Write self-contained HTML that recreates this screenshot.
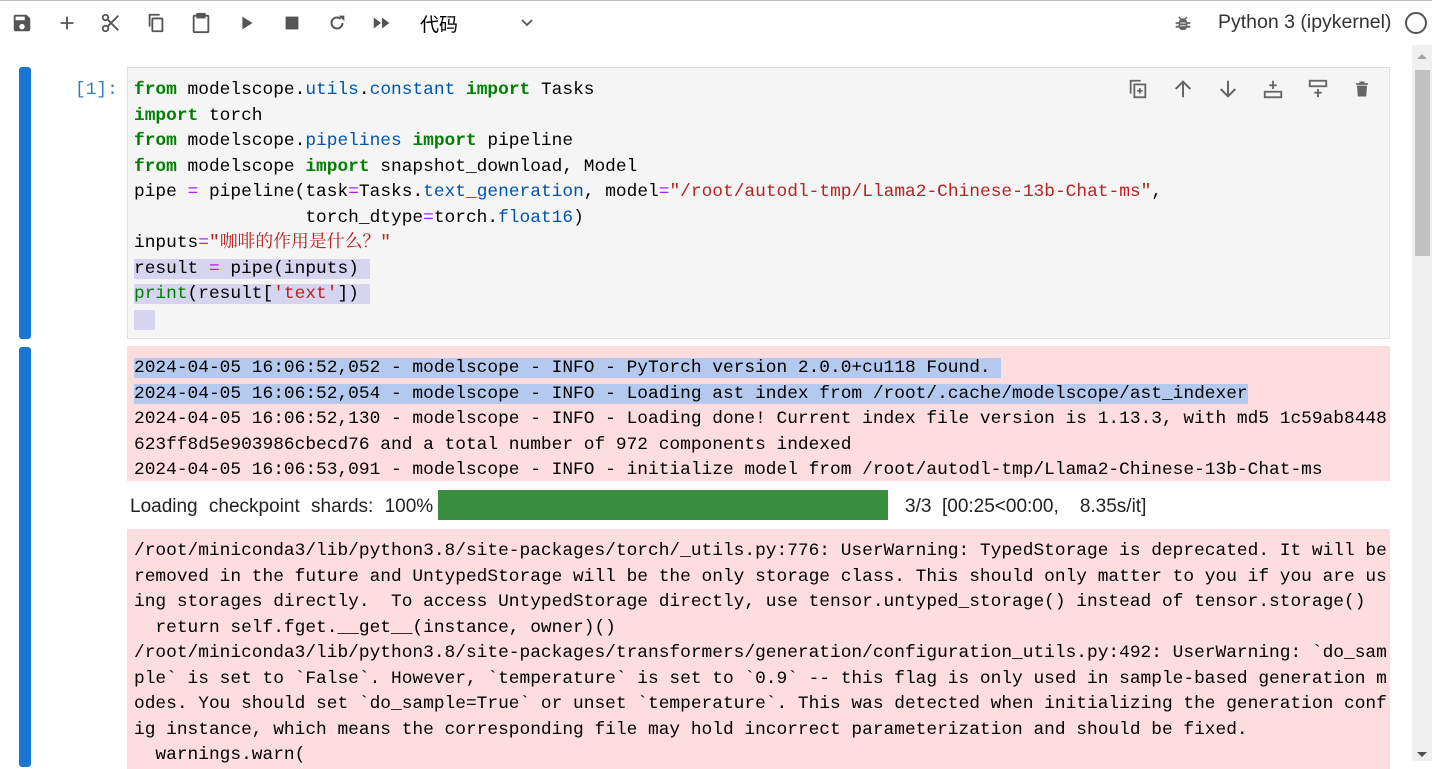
<!DOCTYPE html>
<html><head><meta charset="utf-8"><style>
body{margin:0;width:1432px;height:761px;overflow:hidden;background:#fff;position:relative;font-family:"Liberation Sans","Noto Sans CJK SC",sans-serif}
.abs{position:absolute}
.topline{left:0;top:0;width:1432px;height:1px;background:#bbb}
.ic{position:absolute;top:12px}
.mono{font-family:"Liberation Mono","Noto Sans CJK SC",monospace;font-size:17.85px;line-height:25.5px;white-space:pre;color:#000}
.k{color:#008000;font-weight:bold}
.b{color:#0055aa}
.s{color:#ba2121}
.cj{font-family:"Noto Serif CJK SC",serif;line-height:10px}
.o{color:#aa22ff}
.g{color:#008000}
.sel1{background:#d7d4f0}
.sel2{background:#b4c9ee}
</style></head><body>
<div class="abs topline"></div>
<svg class="ic" style="left:11px" width="22" height="22" viewBox="0 0 24 24"><path fill="#555" d="M17 3H5a2 2 0 0 0-2 2v14a2 2 0 0 0 2 2h14a2 2 0 0 0 2-2V7l-4-4zm-5 16a3 3 0 1 1 0-6 3 3 0 0 1 0 6zm3-10H5V5h10v4z"/></svg>
<svg class="ic" style="left:56px" width="22" height="22" viewBox="0 0 24 24"><path stroke="#555" stroke-width="2" d="M12 5v14M5 12h14"/></svg>
<svg class="ic" style="left:100px" width="22" height="22" viewBox="0 0 24 24"><g fill="none" stroke="#555" stroke-width="2"><circle cx="6" cy="6" r="3"/><circle cx="6" cy="18" r="3"/><path d="M8 8l12 12M8 16L20 4"/></g></svg>
<svg class="ic" style="left:145px" width="22" height="22" viewBox="0 0 24 24"><g fill="none" stroke="#555" stroke-width="2"><path d="M16 3H5v13"/><rect x="8" y="7" width="11" height="14" rx="1"/></g></svg>
<svg class="ic" style="left:190px" width="22" height="22" viewBox="0 0 24 24"><g fill="none" stroke="#555" stroke-width="2"><rect x="4" y="4" width="16" height="18" rx="1"/><rect x="8" y="2" width="8" height="4" fill="#555"/></g></svg>
<svg class="ic" style="left:236px" width="22" height="22" viewBox="0 0 24 24"><path fill="#555" d="M7 5l11 7-11 7z"/></svg>
<svg class="ic" style="left:281px" width="22" height="22" viewBox="0 0 24 24"><rect x="5" y="5" width="14" height="14" fill="#555"/></svg>
<svg class="ic" style="left:326px" width="22" height="22" viewBox="0 0 24 24"><g fill="none" stroke="#555" stroke-width="2.2"><path d="M18 12a6 6 0 1 1-2-4.5"/></g><path fill="#555" d="M14 4h6v6z"/></svg>
<svg class="ic" style="left:371px" width="22" height="22" viewBox="0 0 24 24"><path fill="#555" d="M3 6l8 6-8 6zM12 6l8 6-8 6z"/></svg>
<div class="abs" style="left:420px;top:10px;font-size:19px;color:#000">代码</div>
<svg class="abs" style="left:519px;top:16px" width="16" height="14" viewBox="0 0 16 14"><path d="M3 4l5 5 5-5" fill="none" stroke="#555" stroke-width="1.8"/></svg>
<svg class="abs" style="left:1172px;top:12px" width="22" height="22" viewBox="0 0 24 24"><path fill="#666" d="M8 5l2 2h4l2-2 1 1-2 2c1 1 1.5 2 1.7 3H20v2h-3.3v2H20v2h-3.5A5 5 0 0 1 7.5 17H4v-2h3.3v-2H4v-2h3.3c.2-1 .7-2 1.7-3L7 6z"/><path stroke="#eee" stroke-width="1" d="M9 12h6M9 15h6"/></svg>
<div class="abs" style="left:1218px;top:11px;font-size:19.5px;color:#333">Python 3 (ipykernel)</div>
<div class="abs" style="left:1405px;top:12px;width:18px;height:18px;border:2px solid #555;border-radius:50%"></div>
<div class="abs" style="left:1412px;top:45px;width:20px;height:716px;background:#f0f0f0"></div>
<div class="abs" style="left:1415px;top:70px;width:15px;height:186px;background:#c1c1c1"></div>
<svg class="abs" style="left:1416px;top:52px" width="12" height="8"><path d="M1 7h10L6 2z" fill="#a3a3a3"/></svg>
<svg class="abs" style="left:1416px;top:751px" width="12" height="8"><path d="M1 1h10L6 6z" fill="#505050"/></svg>
<div class="abs" style="left:19px;top:67px;width:12px;height:272px;background:#1976d2;border-radius:3px"></div>
<div class="abs mono" style="left:75px;top:78px;color:#307fc1">[1]:</div>
<div class="abs" style="left:127px;top:67px;width:1261px;height:270px;background:#f5f5f5;border:1px solid #e0e0e0"></div>
<div class="abs mono" style="left:134px;top:78px"><span class="k">from</span> modelscope.<span class="b">utils</span>.<span class="b">constant</span> <span class="k">import</span> Tasks
<span class="k">import</span> torch
<span class="k">from</span> modelscope.<span class="b">pipelines</span> <span class="k">import</span> pipeline
<span class="k">from</span> modelscope <span class="k">import</span> snapshot_download, Model
pipe <span class="o">=</span> pipeline(task<span class="o">=</span>Tasks.<span class="b">text_generation</span>, model<span class="o">=</span><span class="s">"/root/autodl-tmp/Llama2-Chinese-13b-Chat-ms"</span>,
                torch_dtype<span class="o">=</span>torch.<span class="b">float16</span>)
inputs<span class="o">=</span><span class="s">"<span class="cj">咖啡的作用是什么？</span>"</span>
<span class="sel1">result <span class="o">=</span> pipe(inputs) </span>
<span class="sel1"><span class="g">print</span>(result[<span class="s">'text'</span>]) </span>
<span class="sel1">  </span></div>
<div class="abs" style="left:19px;top:347px;width:12px;height:420px;background:#1976d2;border-radius:3px"></div>
<div class="abs" style="left:127px;top:346px;width:1263px;height:135px;background:#fddddd"></div>
<div class="abs mono" style="left:134px;top:356px"><span class="sel2">2024-04-05 16:06:52,052 - modelscope - INFO - PyTorch version 2.0.0+cu118 Found. </span>
<span class="sel2">2024-04-05 16:06:52,054 - modelscope - INFO - Loading ast index from /root/.cache/modelscope/ast_indexer</span>
2024-04-05 16:06:52,130 - modelscope - INFO - Loading done! Current index file version is 1.13.3, with md5 1c59ab8448
623ff8d5e903986cbecd76 and a total number of 972 components indexed
2024-04-05 16:06:53,091 - modelscope - INFO - initialize model from /root/autodl-tmp/Llama2-Chinese-13b-Chat-ms</div>
<div class="abs" style="left:130px;top:496px;font-size:19px;color:#222;word-spacing:6px">Loading checkpoint shards: 100%</div>
<div class="abs" style="left:438px;top:490px;width:450px;height:30px;background:#388e3c"></div>
<div class="abs" style="left:905px;top:496px;font-size:19px;color:#222;white-space:pre">3/3  [00:25&lt;00:00,    8.35s/it]</div>
<div class="abs" style="left:127px;top:529px;width:1263px;height:240px;background:#fddddd"></div>
<div class="abs mono" style="left:134px;top:539px">/root/miniconda3/lib/python3.8/site-packages/torch/_utils.py:776: UserWarning: TypedStorage is deprecated. It will be
removed in the future and UntypedStorage will be the only storage class. This should only matter to you if you are us
ing storages directly.  To access UntypedStorage directly, use tensor.untyped_storage() instead of tensor.storage()
  return self.fget.__get__(instance, owner)()
/root/miniconda3/lib/python3.8/site-packages/transformers/generation/configuration_utils.py:492: UserWarning: `do_sam
ple` is set to `False`. However, `temperature` is set to `0.9` -- this flag is only used in sample-based generation m
odes. You should set `do_sample=True` or unset `temperature`. This was detected when initializing the generation conf
ig instance, which means the corresponding file may hold incorrect parameterization and should be fixed.
  warnings.warn(</div>
<svg class="abs" style="left:1127px;top:77px" width="22" height="24" viewBox="0 0 24 24"><g fill="none" stroke="#666" stroke-width="2"><path d="M15 3H4v14"/><rect x="8" y="7" width="12" height="14"/><path d="M14 11v6M11 14h6"/></g></svg>
<svg class="abs" style="left:1172px;top:77px" width="22" height="24" viewBox="0 0 24 24"><path d="M12 21V4M4 12l8-8 8 8" fill="none" stroke="#666" stroke-width="2.2"/></svg>
<svg class="abs" style="left:1217px;top:77px" width="22" height="24" viewBox="0 0 24 24"><path d="M12 3v17M4 12l8 8 8-8" fill="none" stroke="#666" stroke-width="2.2"/></svg>
<svg class="abs" style="left:1262px;top:77px" width="22" height="24" viewBox="0 0 24 24"><g fill="none" stroke="#666" stroke-width="2"><rect x="3" y="15" width="18" height="6"/><path d="M12 3v9M8 8h8"/></g></svg>
<svg class="abs" style="left:1307px;top:77px" width="22" height="24" viewBox="0 0 24 24"><g fill="none" stroke="#666" stroke-width="2"><rect x="3" y="3" width="18" height="6"/><path d="M12 12v9M8 16h8"/></g></svg>
<svg class="abs" style="left:1352px;top:77px" width="20" height="24" viewBox="0 0 24 24"><path fill="#666" d="M5 5h14v2H5zM9 3h6v2H9zM6 8h12l-1 13H7z"/></svg>
</body></html>
